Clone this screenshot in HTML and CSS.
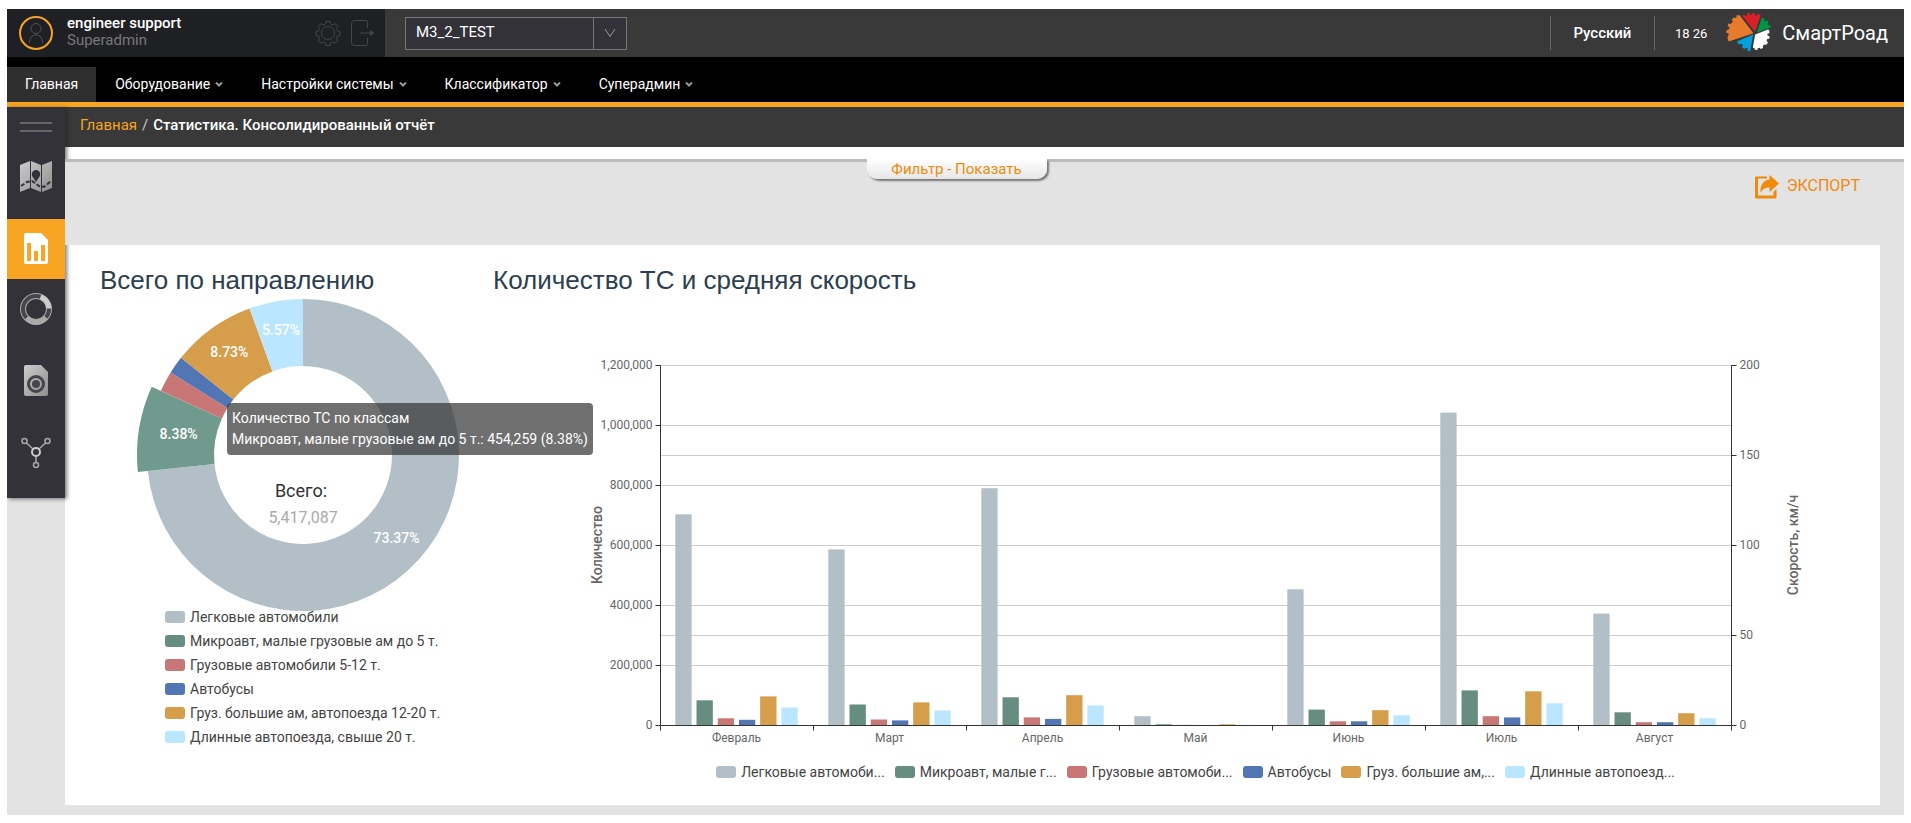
FILE: index.html
```html
<!DOCTYPE html>
<html lang="ru">
<head>
<meta charset="utf-8">
<title>Статистика. Консолидированный отчёт</title>
<link rel="stylesheet" href="styles.css">
</head>
<body>
<div class="page">
  <header class="topbar">
    <div class="user">
      <svg class="avatar" viewBox="0 0 34 34" fill="none"><circle cx="17" cy="17" r="16" stroke="#f7a523" stroke-width="2"/><circle cx="17" cy="12.500" r="5" stroke="#505155"/><path d="M10.500 27c0-5 2.500-8 6.500-8s6.500 3 6.500 8" stroke="#505155"/></svg>
      <div class="user-text"><strong class="user-name">engineer support</strong><span class="user-role">Superadmin</span></div>
      <button class="icon-btn" aria-label="Настройки"><svg width="26" height="26" viewBox="0 0 26 26" fill="none" stroke="#45464a"><circle cx="13" cy="13" r="6.500"/><path d="M11 1.500h4l.6 2.600 2.200.9 2.300-1.400 2.800 2.800-1.400 2.300.9 2.200 2.600.6v4l-2.600.6-.9 2.200 1.400 2.300-2.800 2.800-2.300-1.400-2.200.9-.6 2.600h-4l-.6-2.600-2.200-.9-2.300 1.400-2.800-2.800 1.400-2.300-.9-2.200-2.600-.6v-4l2.600-.6.9-2.200-1.400-2.300 2.800-2.800 2.300 1.400 2.200-.9z"/></svg></button>
      <button class="icon-btn" aria-label="Выход"><svg width="26" height="26" viewBox="0 0 26 26" fill="none" stroke="#45464a"><path d="M17.500 8V2.500q0-2-2-2h-11q-3 0-3 3v19q0 3 3 3h11q2 0 2-2V18"/><path d="M10 13h13"/><path d="M20 10l4.500 3-4.500 3z" fill="#45464a" stroke="none"/></svg></button>
    </div>
    <div class="picker">
      <select class="picker-select" aria-label="Объект"><option>M3_2_TEST</option></select>
      <span class="picker-arrow"><svg width="12" height="10" viewBox="0 0 12 10" fill="none" stroke="#999"><path d="M1 1l5 7.500L11 1"/></svg></span>
    </div>
    <div class="top-right">
      <button class="lang">Русский</button>
      <time class="clock">18 26</time>
      <div class="brand">
        <svg class="brand-logo" viewBox="676 36 140 121">
          <path fill="#e87a2c" d="M758 100L716 46h-9l-1 8-8-1-6 6 4 6-7 7-7-1-2 8 6 3-3 8-7 1v8l7 2-1 7-3 5 4 12z"/>
          <path fill="#da2128" d="M763 96L724 47l5-3 6 4 4-2-2-6 8-1 3 6 5-1 1-5 8 1v6l5 1 3-5 10 2z"/>
          <path fill="#009444" d="M768 98L783 54l8 1-1 6 5 3 5-2 4 6-4 5 3 4 7-1 2 6z"/>
          <path fill="#fff" d="M763 104L802 89l4 3v8l-6 2 1 6 6 1-1 8-7 1-1 6 4 4-5 7-6-1-5 5 1 5-6 4-5-4-5 2-1 5-8-1-1-5-5-1z"/>
          <path fill="#00a1df" d="M757 104L748 155l-8-2 1-6-5-3-6 4-7-6 3-6-4-4-8 2-6-9z"/>
        </svg>
        <span class="brand-name">СмартРоад</span>
      </div>
    </div>
  </header>

  <nav class="nav">
    <a class="nav-link nav-active" href="#">Главная</a>
    <a class="nav-link" href="#">Оборудование <svg class="caret" viewBox="0 0 8 5"><path d="M1 .5l3 3 3-3"/></svg></a>
    <a class="nav-link" href="#">Настройки системы <svg class="caret" viewBox="0 0 8 5"><path d="M1 .5l3 3 3-3"/></svg></a>
    <a class="nav-link" href="#">Классификатор <svg class="caret" viewBox="0 0 8 5"><path d="M1 .5l3 3 3-3"/></svg></a>
    <a class="nav-link" href="#">Суперадмин <svg class="caret" viewBox="0 0 8 5"><path d="M1 .5l3 3 3-3"/></svg></a>
  </nav>

  <div class="body">
    <div class="side-col">
      <aside class="sidebar">
        <button class="burger" aria-label="Меню"></button>
        <a class="side-item" href="#" aria-label="Карта"><svg width="32" height="31" viewBox="0 0 32 31"><defs><linearGradient id="g" x1="0" y1="0" x2="1" y2="1"><stop offset="0" stop-color="#ccc"/><stop offset="1" stop-color="#8f8f8f"/></linearGradient></defs><path fill="url(#g)" d="M0 4L10 0v27L0 31zM11 0l10 4v27l-10-4zM22 4L32 0v27l-10 4z"/><path fill="#323238" d="M16 9a4.200 4.200 0 0 1 4.200 4.200c0 2.500-2 3.800-4.200 7.800-2.200-4-4.200-5.300-4.200-7.800A4.200 4.200 0 0 1 16 9z"/><path fill="none" stroke="#323238" stroke-width="2" stroke-dasharray="4 2" d="M1 25l6-4 5-1 7 5 5 1 7-6"/></svg></a>
        <a class="side-item side-active" href="#" aria-label="Статистика"><svg width="24" height="31" viewBox="0 0 24 31"><path fill="#fff" d="M2 0h15l7 7v22q0 2-2 2H2q-2 0-2-2V2q0-2 2-2z"/><path fill="#f7a523" d="M3 10h4v18H3zM10 18h4v10h-4zM17 12h4v16h-4z"/></svg></a>
        <a class="side-item" href="#" aria-label="Диаграмма"><svg width="32" height="32" viewBox="0 0 32 32" fill="none"><circle cx="16" cy="16" r="13" stroke="#aaa" stroke-width="6"/><circle cx="16" cy="16" r="13" stroke="#45464a" stroke-width="4"/><path d="M20.500 3.800A13 13 0 0 1 29 15.500" stroke="#ccc" stroke-width="5"/><path d="M26 24.300A13 13 0 0 1 6.500 24.800" stroke="#aaa" stroke-width="5"/></svg></a>
        <a class="side-item" href="#" aria-label="Документ"><svg width="24" height="31" viewBox="0 0 24 31"><path fill="url(#g)" d="M2 0h15l7 7v22q0 2-2 2H2q-2 0-2-2V2q0-2 2-2z"/><circle cx="12" cy="19" r="7.500" fill="none" stroke="#45464a" stroke-width="3"/><circle cx="12" cy="19" r="4" fill="#45464a"/></svg></a>
        <a class="side-item" href="#" aria-label="Сеть"><svg width="30" height="32" viewBox="0 0 30 32" fill="none" stroke="#aaa"><path d="M5.500 6L12 12M24.500 6L18 12M15 19v7" stroke-width="1.500"/><circle cx="3.500" cy="4" r="2.500" stroke-width="1.500"/><circle cx="26.500" cy="4" r="2.500" stroke-width="1.500"/><circle cx="15" cy="28" r="2.500" stroke-width="1.500"/><circle cx="15" cy="15" r="4" stroke="#ccc" stroke-width="2"/></svg></a>
      </aside>
    </div>
    <main class="main">
      <div class="crumbs"><a class="crumb-link" href="#">Главная</a><span class="crumb-sep">/</span><span>Статистика. Консолидированный отчёт</span></div>
      <div class="toolbar">
        <button class="filter">Фильтр - Показать</button>
        <button class="export"><svg width="24" height="24" viewBox="0 0 24 24" fill="#f08a0a"><path d="M1 1.500h11v2H3V20.500h15.500V17l3-3V22.500q0 1-1 1H1q-1 0-1-1V2.500q0-1 1-1z"/><path d="M14.500 0L24 8.500 14.500 17v-4.500C10 12.500 7.500 14 5.500 18c-.5-8 3-13 9-13.500z"/></svg><span>ЭКСПОРТ</span></button>
      </div>
      <div class="card-wrap">
        <div class="card">
          <section class="pie-panel">
            <h2 class="title">Всего по направлению</h2>
            <div class="pie-box">
              <svg class="pie" id="pie" width="340" height="310"></svg>
              <div class="tooltip">Количество ТС по классам<br>Микроавт, малые грузовые ам до 5 т.: 454,259 (8.38%)</div>
            </div>
            <ul class="legend legend-col">
              <li><i class="sw c1"></i>Легковые автомобили</li>
              <li><i class="sw c2"></i>Микроавт, малые грузовые ам до 5 т.</li>
              <li><i class="sw c3"></i>Грузовые автомобили 5-12 т.</li>
              <li><i class="sw c4"></i>Автобусы</li>
              <li><i class="sw c5"></i>Груз. большие ам, автопоезда 12-20 т.</li>
              <li><i class="sw c6"></i>Длинные автопоезда, свыше 20 т.</li>
            </ul>
          </section>
          <section class="bar-panel">
            <h2 class="title">Количество ТС и средняя скорость</h2>
            <svg class="bars" id="bars"></svg>
            <ul class="legend legend-row">
              <li><i class="sw c1"></i>Легковые автомоби...</li>
              <li><i class="sw c2"></i>Микроавт, малые г...</li>
              <li><i class="sw c3"></i>Грузовые автомоби...</li>
              <li><i class="sw c4"></i>Автобусы</li>
              <li><i class="sw c5"></i>Груз. большие ам,...</li>
              <li><i class="sw c6"></i>Длинные автопоезд...</li>
            </ul>
          </section>
        </div>
      </div>
    </main>
  </div>
</div>
<script src="charts.js"></script>
</body>
</html>
```
FILE: styles.css
```css
* { box-sizing: border-box; }
body { margin: 9px 7px 8px; background: #fff; font-family: Roboto, sans-serif; font-size: 14px; color: #fff; }
button { font: inherit; color: inherit; background: none; border: 0; padding: 0; cursor: pointer; }
a { text-decoration: none; color: inherit; }
ul { list-style: none; margin: 0; padding: 0; }
svg { display: block; }

.topbar { display: flex; align-items: center; height: 48px; background: #383938; }
.user { display: flex; align-items: center; width: 378px; height: 48px; padding: 0 9px 0 12px; background: #1f2023; }
.avatar { width: 34px; height: 34px; margin-right: 14px; }
.user-text { flex: 1; display: flex; flex-direction: column; font-size: 15px; line-height: 17px; padding-bottom: 2px; }
.user-name { font-weight: 500; }
.user-role { color: #77787b; }
.icon-btn { margin-left: 9px; }
.picker { position: relative; width: 222px; height: 33px; margin-left: 20px; border: 1px solid #77777b; background: #323238; }
.picker-select { appearance: none; width: 100%; height: 100%; border: 0; background: transparent; color: #fff; font: 15px Roboto, sans-serif; padding: 0 40px 2px 10px; }
.picker-arrow { position: absolute; right: 0; top: 0; width: 33px; height: 31px; border-left: 1px solid #77777b; display: flex; align-items: center; justify-content: center; pointer-events: none; }
.top-right { margin-left: auto; display: flex; align-items: center; padding-right: 16px; }
.lang { height: 34px; width: 105px; padding-bottom: 1px; border-left: 1px solid #666; border-right: 1px solid #666; font-size: 15px; font-weight: 500; }
.clock { font-size: 13px; margin: 0 19px 0 20px; }
.brand { display: flex; align-items: center; gap: 9px; font-size: 20px; }
.brand-logo { width: 47px; height: 40px; margin-bottom: 2px; }

.nav { display: flex; align-items: stretch; height: 50px; padding-top: 10px; background: #000; border-bottom: 5px solid #f7a523; font-size: 14px; }
.nav-link { display: flex; align-items: center; gap: 5px; padding: 0 19px 1px; }
.nav-active { background: #2f2f30; padding: 0 18px 1px; }
.caret { width: 8px; height: 5px; fill: none; stroke: #999; stroke-width: 2; }

.body { display: grid; grid-template-columns: 58px minmax(0, 1fr); }
.side-col { background: #e3e3e3; }
.sidebar { position: relative; background: #323238; padding-bottom: 3px; box-shadow: 2px 1px 4px rgba(40, 30, 40, .6); }
.burger { display: block; width: 32px; height: 10px; margin: 0 auto; border-top: 2px solid #666; border-bottom: 2px solid #666; }
.sidebar::before { content: ""; display: block; height: 15px; }
.side-item { display: flex; align-items: center; justify-content: center; height: 60px; margin-bottom: 12px; padding-bottom: 1px; }
.burger + .side-item { margin-top: 15px; }
.side-active { background: #f7a523; margin-bottom: 0; }

.crumbs { display: flex; align-items: center; gap: 5px; height: 40px; padding: 0 15px 4px; background: #383938; font-size: 15px; font-weight: 500; }
.crumb-link { color: #f7a523; font-weight: 400; }
.crumb-sep { font-weight: 400; color: #ccc; }
.toolbar { position: relative; height: 86px; margin-top: 12px; border-top: 3px solid #bbb; background: #e3e3e3; display: flex; justify-content: flex-end; align-items: flex-start; padding: 13px 44px 0 0; }
.filter { position: absolute; top: -3px; left: 50%; width: 180px; height: 20px; margin-left: -118px; border-radius: 0 0 10px 10px; background: linear-gradient(#fff, #e6e6e6); box-shadow: 2px 2px 2px #777; color: #f08a0a; font-size: 15px; line-height: 20px; }
.export { display: flex; align-items: center; gap: 8px; color: #f08a0a; font-size: 16px; line-height: 22px; }
.export span { padding-bottom: 2px; }
.card-wrap { background: #e3e3e3; padding: 0 24px 10px 0; }
.card { display: flex; background: #fff; padding: 20px 0 21px 35px; }
.title { margin: 0; font: 26px/30px "Liberation Sans", Arial, sans-serif; color: #2c3e50; }
.pie-panel { flex: 0 0 393px; }
.bar-panel { flex: 1; min-width: 0; }
.pie-box { position: relative; margin-left: 33px; }
.pie, .bars { overflow: visible; }
.bars { width: 100%; height: 465px; }
.tooltip { position: absolute; left: 94px; top: 108px; padding: 5px; border-radius: 4px; background: rgba(50, 50, 50, .7); line-height: 21px; white-space: nowrap; }
.legend { color: #444; line-height: 24px; }
.legend li { display: flex; align-items: center; gap: 5px; white-space: nowrap; }
.legend-col { margin-left: 65px; }
.legend-row { display: flex; justify-content: center; gap: 10px; padding: 0 148px 0 166px; }
.sw { width: 20px; height: 12px; border-radius: 3px; }
.c1 { background: #b3bfc7; fill: #b3bfc7; }
.c2 { background: #678d80; fill: #678d80; }
.c3 { background: #c97676; fill: #c97676; }
.c4 { background: #5275b3; fill: #5275b3; }
.c5 { background: #d69d4b; fill: #d69d4b; }
.c6 { background: #bae7ff; fill: #bae7ff; }
.picked { fill: #709a8d; }
.pct { font-weight: 500; fill: #fff; text-anchor: middle; }
.sum-label { font-size: 18px; fill: #333; text-anchor: middle; }
.sum { font-size: 16px; fill: #aaa; text-anchor: middle; }
.grid { stroke: #ccc; }
.axis { stroke: #333; }
.tick { font-size: 12px; fill: #666; }
.mid { text-anchor: middle; }
.end { text-anchor: end; }
.axis-name { font-weight: 500; fill: #666; text-anchor: middle; }
```
FILE: charts.js
```js
function el(tag, attrs, text) {
  const node = document.createElementNS('http://www.w3.org/2000/svg', tag);
  for (const key in attrs) node.setAttribute(key, attrs[key]);
  if (text !== undefined) node.textContent = text;
  return node;
}

function drawPie() {
  const svg = document.getElementById('pie');
  const cx = 170, cy = 160, inner = 89, labelRadius = 126;
  const shares = [73.37, 8.38, 2.12, 1.83, 8.73, 5.57];
  let from = 0;
  const labels = [];
  shares.forEach((share, i) => {
    const a = from / 100 * 2 * Math.PI;
    const b = (from + share) / 100 * 2 * Math.PI;
    const outer = i === 1 ? 166 : 156;
    const at = (r, t) => (cx + r * Math.sin(t)).toFixed(2) + ' ' + (cy - r * Math.cos(t)).toFixed(2);
    const big = share > 50 ? 1 : 0;
    svg.append(el('path', {
      class: i === 1 ? 'picked' : 'c' + (i + 1),
      d: `M${at(outer, a)}A${outer} ${outer} 0 ${big} 1 ${at(outer, b)}L${at(inner, b)}A${inner} ${inner} 0 ${big} 0 ${at(inner, a)}Z`
    }));
    if (share > 5) {
      const mid = (a + b) / 2;
      labels.push(el('text', { class: 'pct', x: cx + labelRadius * Math.sin(mid), y: cy - labelRadius * Math.cos(mid) + 4 }, share.toFixed(2) + '%'));
    }
    from += share;
  });
  svg.append(...labels);
  svg.append(el('text', { class: 'sum-label', x: cx - 2, y: 202 }, 'Всего:'));
  svg.append(el('text', { class: 'sum', x: cx, y: 228 }, '5,417,087'));
}

const months = [
  ['Февраль', [704, 84, 24, 19, 97, 60]],
  ['Март', [587, 70, 20, 17, 77, 50]],
  ['Апрель', [791, 94, 27, 22, 101, 67]],
  ['Май', [31, 4, 2, 1, 4, 2]],
  ['Июнь', [454, 53, 14, 14, 51, 34]],
  ['Июль', [1043, 117, 31, 27, 114, 74]],
  ['Август', [373, 44, 11, 11, 41, 24]]
];

function drawBars() {
  const svg = document.getElementById('bars');
  svg.replaceChildren();
  const left = 167.5, top = 70.5, height = 360, bottom = top + height;
  const right = Math.round(svg.clientWidth - 149) + 0.5;
  const band = (right - left) / months.length;
  const line = (cls, x1, y1, x2, y2) => svg.append(el('line', { class: cls, x1, y1, x2, y2 }));
  const text = (cls, x, y, value) => svg.append(el('text', { class: cls, x, y }, value));

  for (let i = 1; i <= 6; i++) line('grid', left, bottom - i * 60, right, bottom - i * 60);
  for (const i of [1, 3]) line('grid', left, bottom - i * 90, right, bottom - i * 90);

  const barWidth = band * 0.8 / 7.5;
  months.forEach(([name, values], m) => {
    const start = left + m * band + band * 0.1 - 0.5;
    values.forEach((v, i) => {
      const h = v * 0.3;
      svg.append(el('rect', { class: 'c' + (i + 1), x: start + i * barWidth * 1.3, y: bottom - h, width: barWidth, height: h }));
    });
    text('tick mid', left + (m + 0.5) * band - 0.5, bottom + 16, name);
  });

  line('axis', left, top, left, bottom);
  line('axis', right, top, right, bottom);
  line('axis', left, bottom, right, bottom);
  for (let m = 0; m <= months.length; m++) {
    const x = Math.round(left + m * band - 0.5) + 0.5;
    line('axis', x, bottom, x, bottom + 5);
  }
  for (let i = 0; i <= 6; i++) {
    const y = bottom - i * 60;
    line('axis', left - 5, y, left, y);
    text('tick end', left - 8, y + 3, (i * 200000).toLocaleString('en-US'));
  }
  for (let i = 0; i <= 4; i++) {
    const y = bottom - i * 90;
    line('axis', right, y, right + 5, y);
    text('tick', right + 8, y + 3, i * 50);
  }
  const name = (x, value) => svg.append(el('text', { class: 'axis-name', transform: `translate(${x} 250) rotate(-90)` }, value));
  name(109, 'Количество');
  name(right + 66, 'Скорость, км/ч');
}

drawPie();
drawBars();
window.addEventListener('resize', drawBars);
```
